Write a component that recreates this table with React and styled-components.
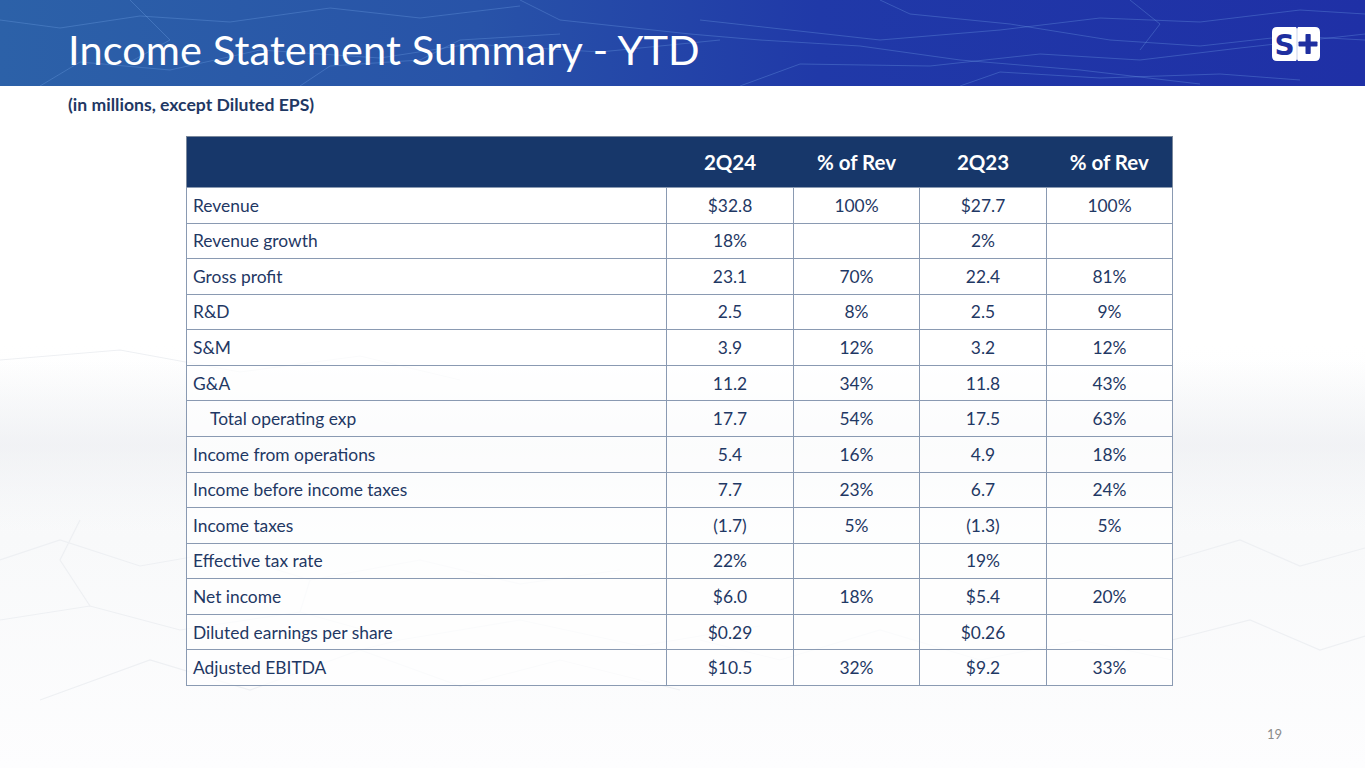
import React from "react";
import styled, { createGlobalStyle } from "styled-components";

const Global = createGlobalStyle`
  html, body { margin: 0; padding: 0; background: #ffffff; }
  body { font-family: Lato, "Open Sans", "Liberation Sans", sans-serif; }
`;

const Slide = styled.div`
  position: relative;
  width: 1365px;
  height: 768px;
  overflow: hidden;
  background:
    linear-gradient(180deg, rgba(255,255,255,0) 0%, rgba(234,236,240,0.6) 50%, rgba(255,255,255,0) 100%) 0 360px / 100% 170px no-repeat,
    linear-gradient(180deg, #ffffff 0%, #ffffff 45%, #f8f9fa 70%, #fdfdfe 100%);
  display: flex;
  flex-direction: column;
`;

const BgNet = styled.svg`
  position: absolute;
  left: 0;
  top: 86px;
  width: 1365px;
  height: 682px;
  pointer-events: none;
`;

const Header = styled.header`
  position: relative;
  height: 86px;
  flex: 0 0 86px;
  box-sizing: border-box;
  padding: 12px 44px 0 68px;
  display: flex;
  align-items: center;
  justify-content: space-between;
  background: linear-gradient(90deg, #2c61a8 0%, #2853a8 35%, #2039a8 60%, #1f30a6 100%);
  overflow: hidden;
`;

const HeaderNet = styled.svg`
  position: absolute;
  inset: 0;
  width: 100%;
  height: 100%;
`;

const Title = styled.h1`
  position: relative;
  margin: 0;
  color: #ffffff;
  font-family: Lato, "Open Sans", sans-serif;
  font-weight: 400;
  font-size: 41.5px;
  letter-spacing: 0.1px;
`;

const LogoWrap = styled.div`
  position: relative;
  width: 50px;
  height: 36px;
  margin-top: -10px;
`;

const Subtitle = styled.div`
  position: relative;
  padding: 8px 68px 0;
  color: #1f3864;
  font-weight: 700;
  font-size: 17.6px;
  height: 30px;
  line-height: 22px;
`;

const TableWrap = styled.div`
  position: relative;
  padding: 12px 0 0 186px;
`;

const Table = styled.table`
  width: 987px;
  border-collapse: collapse;
  table-layout: fixed;
  border: 1.5px solid #7a889c;
  color: #1f3864;
  font-size: 17.4px;
`;

const HeadCell = styled.th`
  height: 50px;
  padding: 0;
  background: #17376a;
  color: #ffffff;
  font-weight: 700;
  font-size: 20.5px;
  text-align: center;
`;

const Row = styled.tr`
  height: 35.57px;
`;

const Cell = styled.td`
  padding: 0 ${(p) => (p.$label ? "6px" : "0")} 0 ${(p) => (p.$indent ? "23px" : p.$label ? "6px" : "0")};
  border: 1px solid #8a9ab2;
  text-align: ${(p) => (p.$label ? "left" : "center")};
  white-space: nowrap;
  background: rgba(255, 255, 255, 0.72);
`;

const PageNum = styled.div`
  position: relative;
  margin-top: auto;
  padding: 0 83px 26px 0;
  text-align: right;
  color: #8c8c8c;
  font-size: 13px;
`;

const rows = [
  ["Revenue", "$32.8", "100%", "$27.7", "100%"],
  ["Revenue growth", "18%", "", "2%", ""],
  ["Gross profit", "23.1", "70%", "22.4", "81%"],
  ["R&D", "2.5", "8%", "2.5", "9%"],
  ["S&M", "3.9", "12%", "3.2", "12%"],
  ["G&A", "11.2", "34%", "11.8", "43%"],
  ["Total operating exp", "17.7", "54%", "17.5", "63%", true],
  ["Income from operations", "5.4", "16%", "4.9", "18%"],
  ["Income before income taxes", "7.7", "23%", "6.7", "24%"],
  ["Income taxes", "(1.7)", "5%", "(1.3)", "5%"],
  ["Effective tax rate", "22%", "", "19%", ""],
  ["Net income", "$6.0", "18%", "$5.4", "20%"],
  ["Diluted earnings per share", "$0.29", "", "$0.26", ""],
  ["Adjusted EBITDA", "$10.5", "32%", "$9.2", "33%"],
];

function Logo() {
  return (
    <svg width="50" height="36" viewBox="0 0 50 36">
      <path d="M6 1 H25 L26 3 L27 1 H44 Q49 1 49 6 V30 Q49 35 44 35 H27 L26 33 L25 35 H6 Q1 35 1 30 V6 Q1 1 6 1 Z" fill="#ffffff" />
      <line x1="26" y1="3" x2="26" y2="33" stroke="#c9d2ea" strokeWidth="1" />
      <text x="13.5" y="28.5" textAnchor="middle" fontFamily="'DejaVu Sans', sans-serif" fontWeight="700" fontSize="28" fill="#1f2fa0">S</text>
      <rect x="34.5" y="8" width="5.2" height="20" rx="0.8" fill="#1f2fa0" />
      <rect x="27.5" y="15.4" width="19" height="5.2" rx="0.8" fill="#1f2fa0" />
    </svg>
  );
}

const headerLines = [
  "M0 20 L60 28 L140 16 L230 22 L330 8 L420 18 L520 6",
  "M40 86 L80 62 L170 70 L260 50 L380 58 L470 44 L600 52 L720 40",
  "M520 0 L560 20 L690 34 L760 40 L860 46 L960 60 L1080 70 L1200 84",
  "M700 20 L790 30 L880 40 L1000 30 L1100 18 L1200 22 L1300 10 L1365 14",
  "M740 86 L800 64 L930 66 L1040 54 L1140 60 L1240 48 L1365 34",
  "M880 0 L910 14 L1010 24 L1110 40 L1200 46 L1290 36 L1365 40",
  "M960 86 L1000 72 L1100 78 L1220 74 L1300 80",
  "M300 86 L330 66 L420 60 L460 40 L560 34",
  "M130 0 L170 40 L130 62",
  "M1130 0 L1160 24 L1140 50",
];

const bgLines = [
  "M0 560 L60 540 L140 566 L220 552 L310 580 L420 560 L520 584 L620 570",
  "M0 620 L90 606 L180 630 L300 612 L400 640 L520 620 L640 646 L760 626",
  "M40 700 L150 660 L250 690 L360 650 L460 686 L560 660 L680 690",
  "M1172 560 L1240 540 L1300 566 L1365 548",
  "M1172 640 L1250 620 L1320 650 L1365 636",
  "M0 360 L120 350 L240 372 L360 356 L460 380",
  "M700 640 L780 660 L880 630 L980 660 L1080 640 L1172 660",
  "M80 520 L60 560 L90 606",
  "M300 612 L310 580",
  "M400 640 L360 650",
];

export default function App() {
  return (
    <>
      <Global />
      <Slide>
        <BgNet viewBox="0 86 1365 682">
          {bgLines.map((d, i) => (
            <path key={i} d={d} fill="none" stroke="#eef0f3" strokeWidth="1.2" />
          ))}
        </BgNet>
        <Header>
          <HeaderNet viewBox="0 0 1365 86" preserveAspectRatio="none">
            {headerLines.map((d, i) => (
              <path key={i} d={d} fill="none" stroke="rgba(120,170,235,0.3)" strokeWidth="1" />
            ))}
          </HeaderNet>
          <Title>Income Statement Summary - YTD</Title>
          <LogoWrap>
            <Logo />
          </LogoWrap>
        </Header>
        <Subtitle>(in millions, except Diluted EPS)</Subtitle>
        <TableWrap>
          <Table>
            <colgroup>
              <col style={{ width: "480px" }} />
              <col style={{ width: "127px" }} />
              <col style={{ width: "126px" }} />
              <col style={{ width: "127px" }} />
              <col style={{ width: "126px" }} />
            </colgroup>
            <thead>
              <tr>
                <HeadCell />
                <HeadCell>2Q24</HeadCell>
                <HeadCell>% of Rev</HeadCell>
                <HeadCell>2Q23</HeadCell>
                <HeadCell>% of Rev</HeadCell>
              </tr>
            </thead>
            <tbody>
              {rows.map((r) => (
                <Row key={r[0]}>
                  <Cell $label $indent={r[5]}>{r[0]}</Cell>
                  <Cell>{r[1]}</Cell>
                  <Cell>{r[2]}</Cell>
                  <Cell>{r[3]}</Cell>
                  <Cell>{r[4]}</Cell>
                </Row>
              ))}
            </tbody>
          </Table>
        </TableWrap>
        <PageNum>19</PageNum>
      </Slide>
    </>
  );
}
